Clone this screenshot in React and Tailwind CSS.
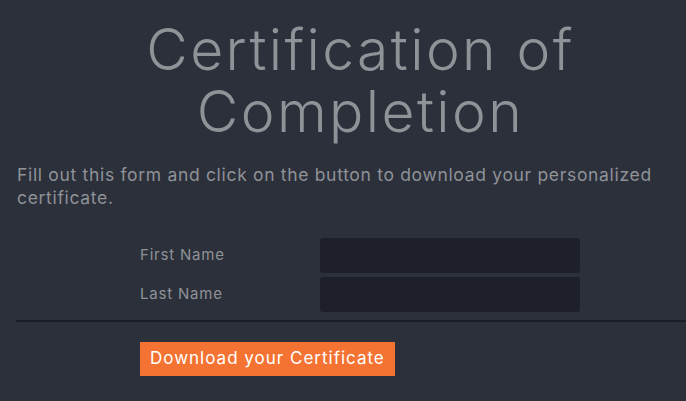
import React from 'react';

const App = () => {
  return (
    <div className="min-h-[401px] w-[686px] overflow-hidden bg-[#2b303b] font-['Inter',sans-serif] text-[#8f9297]">
      <h1 className="pl-[35px] pt-[19px] text-center text-[57px] font-light leading-[62px] tracking-[2.4px]">
        <span className="block">Certification of</span>
        <span className="block">Completion</span>
      </h1>

      <p className="mt-[20px] pl-[17px] pr-[20px] text-[17.5px] leading-[23px] tracking-[0.68px]">
        Fill out this form and click on the button to download your personalized certificate.
      </p>

      <form className="mt-[29px] ml-[16px]">
        <div className="flex flex-col gap-[4px] pl-[124px]">
          <div className="flex items-center">
            <label className="w-[180px] text-[15px] tracking-[0.8px]">First Name</label>
            <input className="h-[35px] w-[260px] rounded-[3px] bg-[#1e2029] outline-none" />
          </div>
          <div className="flex items-center">
            <label className="w-[180px] text-[15px] tracking-[0.8px]">Last Name</label>
            <input className="h-[35px] w-[260px] rounded-[3px] bg-[#1e2029] outline-none" />
          </div>
        </div>

        <div className="mt-[8px] h-[2px] bg-[#1c1e25]" />

        <div className="pl-[124px] pt-[20px]">
          <button type="button" className="h-[34px] bg-[#f47333] px-[10px] text-[17px] tracking-[1px] text-white">
            Download your Certificate
          </button>
        </div>
      </form>
    </div>
  );
};

export default App;
